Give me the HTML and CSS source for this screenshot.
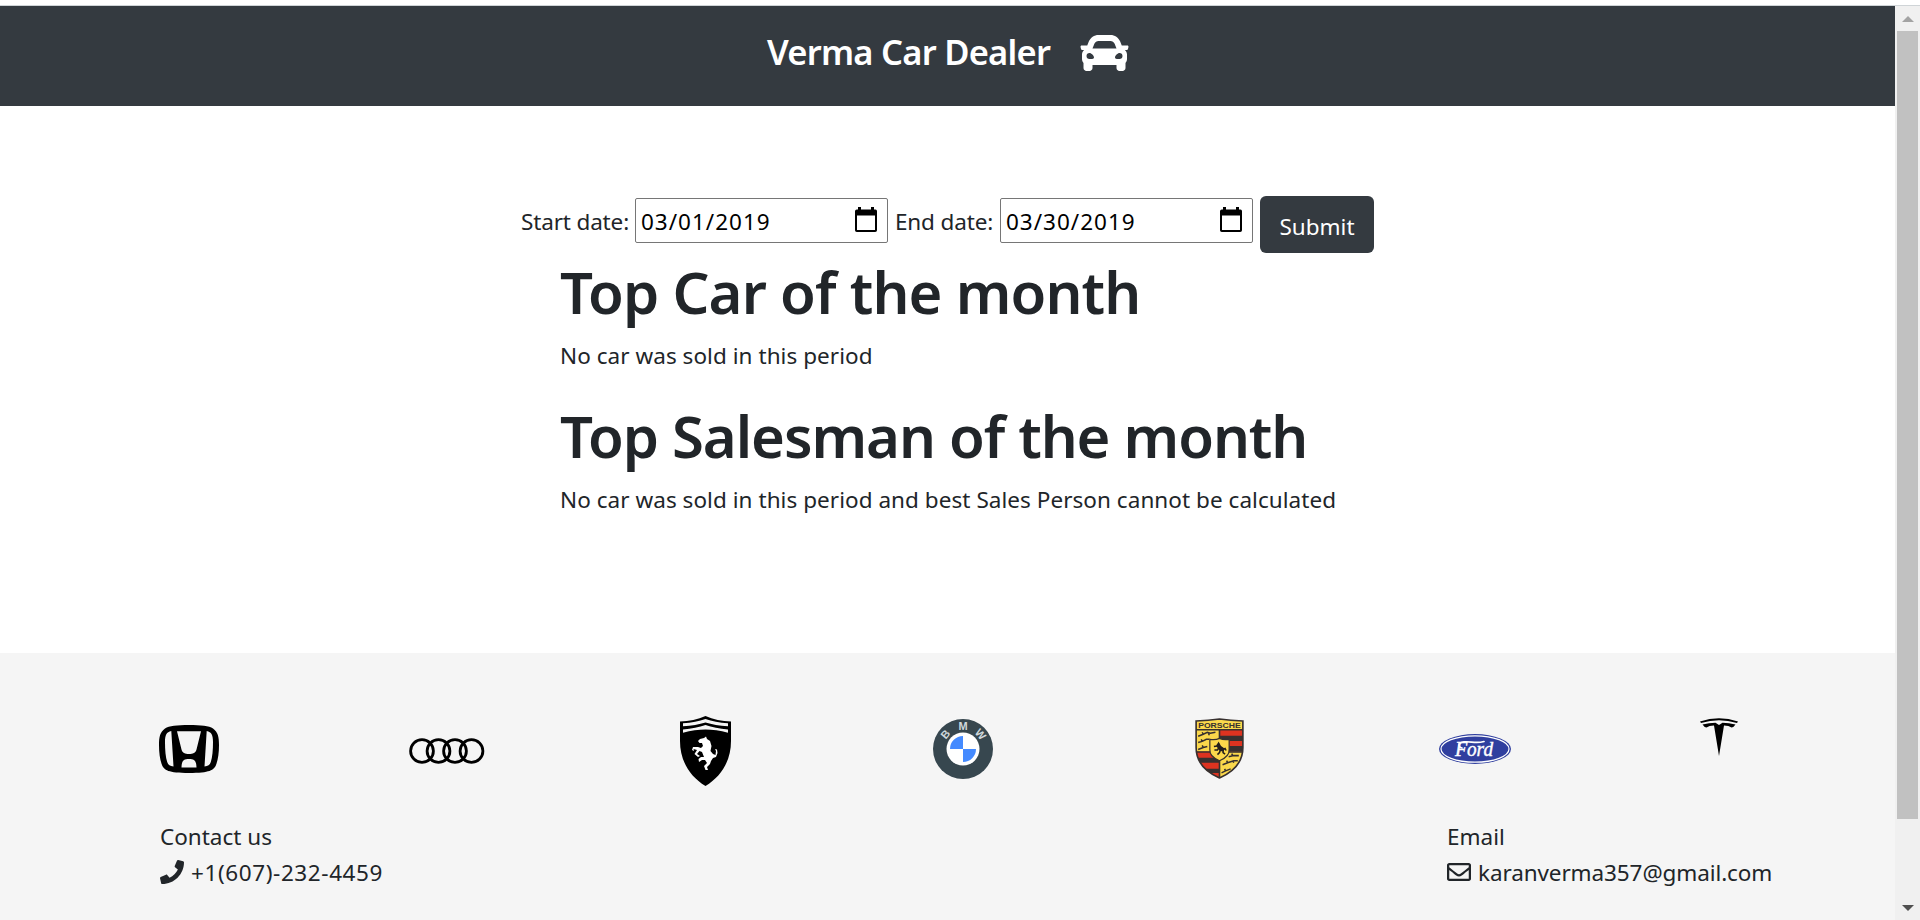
FILE: index.html
```html
<!DOCTYPE html>
<html lang="en">
<head>
<meta charset="utf-8">
<title>Verma Car Dealer</title>
<link rel="stylesheet" href="styles.css">
</head>
<body>
<div class="window">
  <div class="page">
    <header class="navbar">
      <h2 class="brand">Verma Car Dealer</h2>
      <svg class="car" viewBox="0 0 512 512"><path fill="#fff" d="M499.99 176h-59.87l-16.64-41.6C406.38 91.63 365.57 64 319.5 64h-127c-46.06 0-86.88 27.63-103.99 70.4L71.87 176H12.01C4.2 176-1.53 183.34.37 190.91l6 24C7.7 220.25 12.5 224 18.01 224h20.07C24.65 235.73 16 252.78 16 272v48c0 16.12 6.16 30.67 16 41.93V416c0 17.67 14.33 32 32 32h32c17.67 0 32-14.33 32-32v-32h256v32c0 17.67 14.33 32 32 32h32c17.67 0 32-14.33 32-32v-54.07c9.84-11.25 16-25.8 16-41.93v-48c0-19.22-8.65-36.27-22.07-48H494c5.51 0 10.31-3.75 11.64-9.09l6-24c1.89-7.57-3.84-14.91-11.65-14.91zm-352.06-17.83c7.29-18.22 24.94-30.17 44.57-30.17h127c19.63 0 37.28 11.95 44.57 30.17L384 208H128l19.93-49.83zM96 319.8c-19.2 0-32-12.76-32-31.9S76.8 256 96 256s48 28.71 48 47.85-28.8 15.95-48 15.95zm320 0c-19.2 0-48 3.19-48-15.95S396.8 256 416 256s32 12.76 32 31.9-12.8 31.9-32 31.9z"/></svg>
    </header>

    <main class="content">
      <form class="dates">
        <label class="label-start">Start date:</label>
        <div class="date-field"><span class="date-text">03/01/2019</span><svg class="calendar" viewBox="0 0 24 26"><path d="M4 0h3v2.500h10V0h3v2.500h1.500A1.800 1.800 0 0 1 23 4.300v18.900A1.800 1.800 0 0 1 21.200 25H2.800A1.800 1.800 0 0 1 1 23.200V4.300A1.800 1.800 0 0 1 2.800 2.500H4zM3 8.500V23h18V8.500z" fill-rule="evenodd"/></svg></div>
        <label class="label-end">End date:</label>
        <div class="date-field"><span class="date-text">03/30/2019</span><svg class="calendar" viewBox="0 0 24 26"><path d="M4 0h3v2.500h10V0h3v2.500h1.500A1.800 1.800 0 0 1 23 4.300v18.900A1.800 1.800 0 0 1 21.200 25H2.800A1.800 1.800 0 0 1 1 23.200V4.300A1.800 1.800 0 0 1 2.800 2.500H4zM3 8.500V23h18V8.500z" fill-rule="evenodd"/></svg></div>
        <button class="submit" type="button">Submit</button>
      </form>
      <section class="results">
        <h1 class="heading">Top Car of the month</h1>
        <p class="note">No car was sold in this period</p>
        <h1 class="heading heading-sales">Top Salesman of the month</h1>
        <p class="note">No car was sold in this period and best Sales Person cannot be calculated</p>
      </section>
    </main>

    <footer class="footer">
      <div class="logos">
        <svg class="honda" viewBox="0 0 60 48">
          <path fill-rule="evenodd" d="M30 0C42 0 50 .8 54 3.500C59 7 60 12 60 20C60 28 59 35 57 40C55 45 51 48 30 48C9 48 5 45 3 40C1 35 0 28 0 20C0 12 1 7 6 3.500C10 .8 18 0 30 0zM12.300 6C7.500 7 6 10 6 17C6 25 6.600 32 8.200 37C9.200 40 11 41 14.500 41.500zM47.700 6C52.500 7 54 10 54 17C54 25 53.400 32 51.800 37C50.800 40 49 41 45.500 41.500zM18 6.300L22.500 24.500C23.500 28 26 29 30 29C34 29 36.500 28 37.500 24.500L42 6.300zM22.500 42.500C22.800 35.500 24.500 34 30 34C35.500 34 37.200 35.500 37.500 42.500z"/>
        </svg>
        <svg class="audi" viewBox="0 0 76 26" fill="none" stroke="#000" stroke-width="2.800"><circle cx="13" cy="13" r="11.400"/><circle cx="29.500" cy="13" r="11.400"/><circle cx="46" cy="13" r="11.400"/><circle cx="62.500" cy="13" r="11.400"/></svg>
        <svg class="ferrari" viewBox="0 0 51 70">
          <path d="M0 5.500C9 5 18 3.500 25.500 0C33 3.500 42 5 51 5.500V25C51 44 42 60 25.500 70C9 60 0 44 0 25z"/>
          <path fill="#f5f5f5" d="M3 7.300Q16 6.500 25.500 3Q35 6.500 48 7.300V10.300Q35 9.500 25.500 6.500Q16 9.500 3 10.300zM3 13.500Q16 12 25.500 9Q35 12 48 13.500V16.700Q36 13.500 25.500 13.500Q15 13.500 3 16.700z"/>
          <path fill="#fff" d="M20 23L24 22L26 20.500L27 23L30 25L31.500 30L30.500 35L33 38L35.500 39L36 35L35 33L37 33.500L37.500 37L36 41L33 42L31 45L30 48L27 51L28 54L25.500 54L24 50L27 47L25 44L22 44L19 46L18.500 43L21 41L24 41L22 36L19.500 35L17 38L20 40L18 41L14.500 38L17 34L13.500 33L14 35L12 34L13 31L18 31L21 32L23 30L22 27L19.500 27L18 25z"/>
        </svg>
        <svg class="bmw" viewBox="0 0 60 60">
          <circle cx="30" cy="30" r="30" fill="#37474f"/><circle cx="30" cy="30" r="16.500" fill="#fff"/>
          <path fill="#448aff" d="M30 30V17A13 13 0 0 0 17 30zM30 30V43A13 13 0 0 0 43 30z"/>
          <g class="badge-text" fill="#cfd8dc" text-anchor="middle"><text x="30" y="10.800">M</text><text transform="rotate(-50 30 30)" x="30" y="10.800">B</text><text transform="rotate(50 30 30)" x="30" y="10.800">W</text></g>
        </svg>
        <svg class="porsche" viewBox="0 0 48 60">
          <defs><clipPath id="shield"><path d="M1 3Q13 2.500 24 1Q35 2.500 47 3V29Q47 49 24 59Q1 49 1 29z"/></clipPath></defs>
          <g clip-path="url(#shield)">
            <path fill="#fbd84b" d="M0 0h48v60H0z"/>
            <path fill="#dd3320" d="M24 11h24v22H24zM0 33h24v27H0z"/>
            <path fill="#37302f" d="M24 17.500h24v5H24zM24 27.500h24v5.500H24zM0 39h24v5H0zM0 50h24v4H0z"/>
            <path fill="none" stroke="#37302f" stroke-width="1.600" d="M0 11.500h48M24 12v48M0 33.500h48"/>
            <path fill="none" stroke="#37302f" stroke-width="1.500" d="M3 18l5-2 4-2 3 1 5-1M8 16l-1-2M13 15l1 2M3 24l4-1 4-2 3 0M7 23l-1-2M3 31l5-2 4-1M8 29l-1-2M33 38l5-1 5 0M37 37l-1-2M27 46l5-2 6-2 4 0M32 44l-1-2M37 42l1 2M26 54l4-2 5-2M30 52l-1-2"/>
          </g>
          <path fill="none" stroke="#37302f" stroke-width="1.600" d="M1 3Q13 2.500 24 1Q35 2.500 47 3V29Q47 49 24 59Q1 49 1 29z"/>
          <path fill="#fbd84b" stroke="#37302f" stroke-width="1.200" d="M14.500 21Q20 22 24 20Q28 22 33.500 21V31Q34 38 24 42Q14 38 14.500 31z"/>
          <path fill="none" stroke="#211d1c" stroke-width="1.500" d="M18.500 28l3-.5 1.500-2.500 1 3.500 3.500 2.500 2-1 1 2M23.500 29l-1.500 2.500-3 0M27.500 30.500l0 3.500 2 1.500M25 31l-1 3-2 2"/>
          <path fill="#211d1c" d="M21 26.500l2.500-2.500 2 3.500 3.500 2.500-1 3-3.500-.5-2.500-3z"/>
          <text class="porsche-text" x="24" y="9.800" text-anchor="middle" textLength="42" lengthAdjust="spacingAndGlyphs" fill="#37302f">PORSCHE</text>
        </svg>
        <svg class="ford" viewBox="0 0 72 30"><ellipse cx="36" cy="15" rx="36" ry="15" fill="#303f9f"/><ellipse cx="36" cy="15" rx="34" ry="13.200" fill="none" stroke="#fff" stroke-width="1.200"/><text class="ford-text" fill="#fff"><tspan x="16" y="22.300">F</tspan><tspan x="28" y="22.300" textLength="26" lengthAdjust="spacingAndGlyphs">ord</tspan></text><path fill="none" stroke="#fff" stroke-width="1.700" stroke-linecap="round" d="M23 14C18.500 13 19 8.500 25 7.800C32 7.200 37 10 45 7.500"/></svg>
        <svg class="tesla" viewBox="0 0 38 38"><path d="M0 3.500Q19-3 38 3.500L37 5Q19-.5 1 5zM2.500 6.500Q9 4.800 15.500 4.800L19 7L22.500 4.800Q29 4.800 35.500 6.500Q34 9 31.500 9.500Q29 7.500 24 7.400L19 38L14 7.400Q9 7.500 6.500 9.500Q4 9 2.500 6.500z"/></svg>
      </div>
      <div class="contacts">
        <div class="contact">
          <div>Contact us</div>
          <div class="line"><svg class="icon" viewBox="0 0 512 512"><path d="M493.4 24.6l-104-24c-11.3-2.6-22.9 3.3-27.5 13.900l-48 112c-4.2 9.800-1.4 21.300 6.900 28l60.600 49.600c-36 76.700-98.900 140.500-177.200 177.200l-49.600-60.600c-6.800-8.300-18.200-11.100-28-6.900l-112 48C3.9 366.500-2 378.100.6 389.400l24 104C27.100 504.200 36.700 512 48 512c256.100 0 464-207.500 464-464 0-11.200-7.700-20.900-18.600-23.400z"/></svg><span class="phone">+1(607)-232-4459</span></div>
        </div>
        <div class="contact">
          <div>Email</div>
          <div class="line"><svg class="icon" viewBox="0 0 512 512"><path d="M464 64H48C21.490 64 0 85.490 0 112v288c0 26.510 21.490 48 48 48h416c26.510 0 48-21.490 48-48V112c0-26.510-21.490-48-48-48zm0 48v40.805c-22.422 18.259-58.168 46.651-134.587 106.490-16.841 13.247-50.201 45.072-73.413 44.701-23.208.375-56.579-31.459-73.413-44.701C106.180 199.465 70.425 171.067 48 152.805V112h416zM48 400V214.398c22.914 18.251 55.409 43.862 104.938 82.646 21.857 17.205 60.134 55.186 103.062 54.955 42.717.231 80.509-37.199 103.053-54.947 49.528-38.783 82.032-64.401 104.947-82.653V400H48z"/></svg><span class="address">karanverma357@gmail.com</span></div>
        </div>
      </div>
    </footer>
  </div>
  <div class="scrollbar"><span class="arrow arrow-up"></span><span class="thumb"></span><span class="arrow arrow-down"></span></div>
</div>
</body>
</html>
```
FILE: styles.css
```css
* { box-sizing: border-box; }
body { margin: 0; height: 920px; overflow: hidden; background: #fff; color: #212529; font: 400 22.5px/36px "Noto Sans", "Open Sans", sans-serif; white-space: nowrap; }
svg { display: block; flex: none; }
h1, h2, p { margin: 0; }
.window { display: flex; height: 920px; padding-top: 5px; }
.page { width: 1895px; border-top: 1px solid #cfd4d7; display: flex; flex-direction: column; }

.navbar { height: 100px; background: #343a40; display: flex; padding: 23px 0 0 767px; }
.brand { width: 313px; color: #fff; font-size: 34.5px; line-height: 46px; font-weight: 600; letter-spacing: -.75px; }
.car { width: 49px; height: 48px; }

.content { height: 547px; padding-top: 90px; }
.dates { display: flex; height: 57px; padding-left: 521px; }
.dates label { padding-top: 8px; letter-spacing: -.15px; }
.label-start { width: 114px; }
.label-end { width: 105px; margin-left: 7px; }
.date-field { width: 253px; height: 45px; margin-top: 2px; border: 1px solid #767676; border-radius: 2px; color: #000; display: flex; justify-content: space-between; padding: 5px 9px 0 5px; }
.date-text { letter-spacing: 1px; }
.calendar { width: 24px; height: 26px; margin-top: 3px; }
.submit { width: 114px; height: 57px; margin-left: 7px; padding: 4px 0 0; border: 0; border-radius: 6px; background: #343a40; color: #fff; font: inherit; }
.results { padding-left: 560px; }
.heading { font-size: 58px; line-height: 72px; font-weight: 600; letter-spacing: -.9px; padding-top: 3px; height: 85px; }
.heading-sales { letter-spacing: -1.05px; }
.note { height: 59px; letter-spacing: .05px; }

.footer { flex: 1; background: #f5f5f5; padding-top: 63px; }
.logos { display: flex; height: 103px; padding-left: 159px; }
.honda { width: 60px; height: 48px; margin-top: 9px; }
.audi { width: 76px; height: 26px; margin: 22px 0 0 190px; }
.ferrari { width: 51px; height: 70px; margin: 0 0 0 195px; }
.bmw { width: 60px; height: 60px; margin: 3px 0 0 202px; }
.porsche { width: 49px; height: 61px; margin: 2px 0 0 202px; }
.ford { width: 72px; height: 30px; margin: 18px 0 0 195px; }
.tesla { width: 38px; height: 38px; margin: 2px 0 0 189px; }
.badge-text { font: 700 11px "Liberation Sans", sans-serif; }
.porsche-text { font: 700 7px "Liberation Sans", sans-serif; }
.ford-text { font: italic 400 20px "Liberation Serif", serif; stroke: #fff; stroke-width: .4px; }
.contacts { display: flex; justify-content: space-between; padding: 0 122px 0 160px; }
.contact { width: 326px; }
.line { display: flex; gap: 7px; }
.icon { width: 24px; height: 24px; margin-top: 5px; fill: #212529; }
.phone { letter-spacing: .6px; }
.address { letter-spacing: -.1px; }

.scrollbar { width: 25px; border-top: 1px solid #cfd4d7; background: #f0f0f0; display: flex; flex-direction: column; align-items: center; }
.arrow { border: 6px solid transparent; }
.arrow-up { margin-top: 4px; border-bottom-color: #a3a3a3; }
.thumb { width: 21px; height: 788px; margin-top: 9px; background: #c1c1c1; }
.arrow-down { margin-top: 86px; border-top-color: #505050; }
```
